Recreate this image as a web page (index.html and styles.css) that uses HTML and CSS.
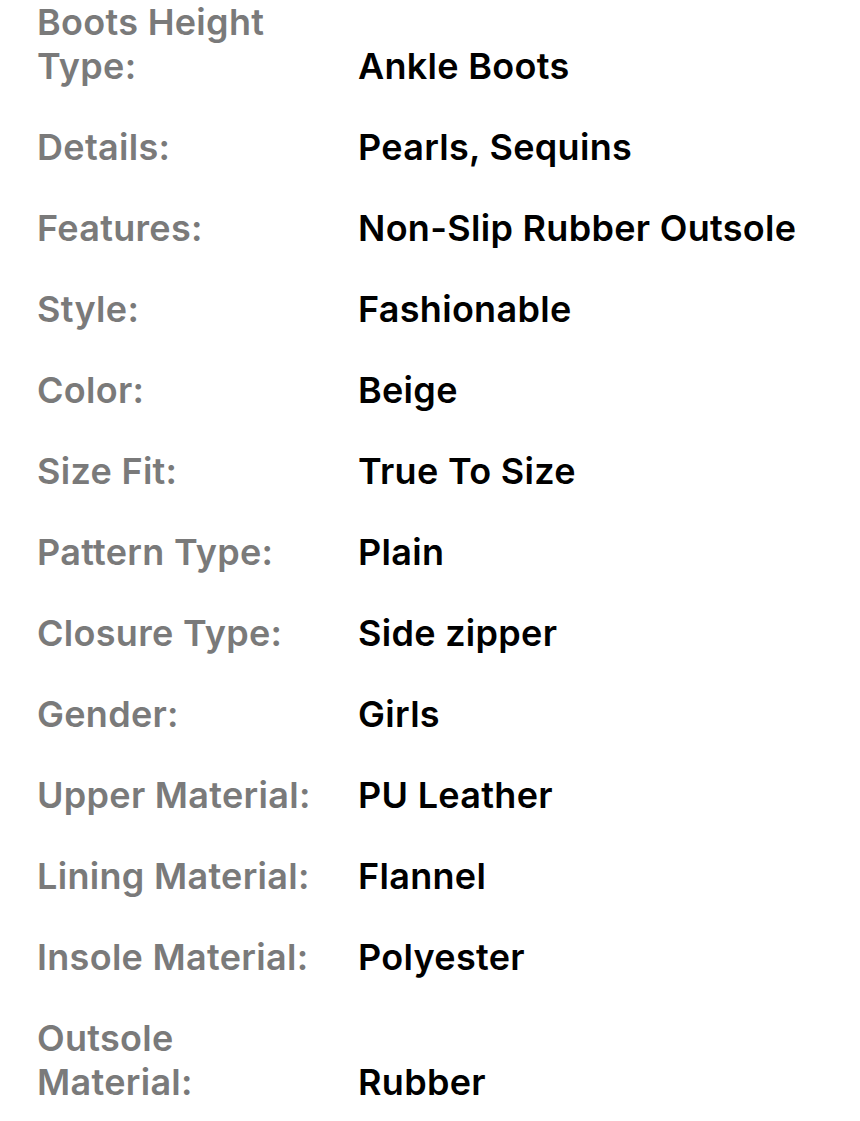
FILE: index.html
```html
<!DOCTYPE html>
<html>
<head>
<meta charset="utf-8">
<link rel="stylesheet" href="styles.css">
</head>
<body>
<div class="specs">
  <div class="row"><div class="label">Boots Height<br>Type:</div><div class="value">Ankle Boots</div></div>
  <div class="row"><div class="label">Details:</div><div class="value">Pearls, Sequins</div></div>
  <div class="row"><div class="label">Features:</div><div class="value">Non-Slip Rubber Outsole</div></div>
  <div class="row"><div class="label">Style:</div><div class="value">Fashionable</div></div>
  <div class="row"><div class="label">Color:</div><div class="value">Beige</div></div>
  <div class="row"><div class="label">Size Fit:</div><div class="value">True To Size</div></div>
  <div class="row"><div class="label">Pattern Type:</div><div class="value">Plain</div></div>
  <div class="row"><div class="label">Closure Type:</div><div class="value">Side zipper</div></div>
  <div class="row"><div class="label">Gender:</div><div class="value">Girls</div></div>
  <div class="row"><div class="label">Upper Material:</div><div class="value">PU Leather</div></div>
  <div class="row"><div class="label">Lining Material:</div><div class="value">Flannel</div></div>
  <div class="row"><div class="label">Insole Material:</div><div class="value">Polyester</div></div>
  <div class="row"><div class="label">Outsole<br>Material:</div><div class="value">Rubber</div></div>
</div>
</body>
</html>
```
FILE: styles.css
```css
html, body {
  margin: 0;
  padding: 0;
  background: #ffffff;
}
.specs {
  display: flex;
  flex-direction: column;
  gap: 37px;
  padding: 0 0 0 37px;
  font-family: Inter, "Noto Sans", sans-serif;
  font-size: 36px;
  font-weight: 600;
  letter-spacing: 0.3px;
  line-height: 44px;
}
.row {
  display: grid;
  grid-template-columns: 321px auto;
  align-items: end;
}
.label {
  color: #7a7a7a;
}
.value {
  color: #000000;
}
```
